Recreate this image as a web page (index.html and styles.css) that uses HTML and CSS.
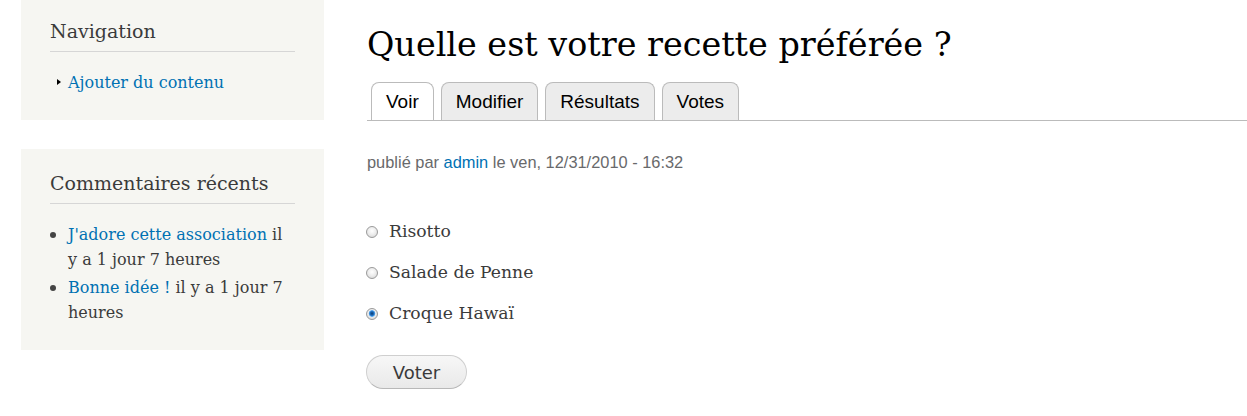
FILE: index.html
```html
<!DOCTYPE html>
<html lang="fr">
<head>
<meta charset="utf-8">
<title>Quelle est votre recette préférée ?</title>
<link rel="stylesheet" href="styles.css">
</head>
<body>
<div class="page">
  <aside class="sidebar">
    <section class="block">
      <h2 class="block-title">Navigation</h2>
      <ul class="menu">
        <li class="leaf"><a href="#">Ajouter du contenu</a></li>
      </ul>
    </section>
    <section class="block">
      <h2 class="block-title">Commentaires récents</h2>
      <ul class="comments">
        <li><a href="#">J'adore cette association</a> il y a 1 jour 7 heures</li>
        <li><a href="#">Bonne idée !</a> il y a 1 jour 7 heures</li>
      </ul>
    </section>
  </aside>
  <main class="content">
    <h1 class="title">Quelle est votre recette préférée ?</h1>
    <ul class="tabs">
      <li class="tab active"><a href="#">Voir</a></li>
      <li class="tab"><a href="#">Modifier</a></li>
      <li class="tab"><a href="#">Résultats</a></li>
      <li class="tab"><a href="#">Votes</a></li>
    </ul>
    <div class="meta">publié par <a href="#">admin</a> le ven, 12/31/2010 - 16:32</div>
    <form class="poll">
      <label class="choice"><input class="radio" type="radio" name="choice"> Risotto</label>
      <label class="choice"><input class="radio" type="radio" name="choice"> Salade de Penne</label>
      <label class="choice"><input class="radio" type="radio" name="choice" checked> Croque Hawaï</label>
      <button class="btn" type="button">Voter</button>
    </form>
  </main>
</div>
</body>
</html>
```

FILE: styles.css
```css
html, body {
  margin: 0;
  padding: 0;
  background: #fff;
}
body {
  font-family: "DejaVu Serif", Georgia, serif;
  color: #3b3b3b;
}
a {
  color: #0071b3;
  text-decoration: none;
}
.page {
  display: flex;
  align-items: flex-start;
  padding-left: 21px;
}
.sidebar {
  width: 303px;
  margin-top: -3px;
  display: flex;
  flex-direction: column;
  gap: 29px;
}
.block {
  background: #f6f6f2;
  padding: 21px 29px 25px 29px;
}
.block-title {
  margin: 0;
  font-weight: normal;
  font-size: 19px;
  line-height: 26px;
  padding-bottom: 7px;
  border-bottom: 1px solid #d6d6d6;
  color: #3b3b3b;
}
.menu, .comments {
  list-style: none;
  margin: 18px 0 0 0;
  padding: 0;
  font-size: 16px;
  line-height: 25px;
}
.menu li, .comments li {
  position: relative;
  padding-left: 18px;
}
.comments li + li {
  margin-top: 3px;
}
.menu li::before {
  content: "";
  position: absolute;
  left: 7px;
  top: 9px;
  border-left: 4px solid #000;
  border-top: 3.5px solid transparent;
  border-bottom: 3.5px solid transparent;
}
.comments li::before {
  content: "";
  position: absolute;
  left: 0;
  top: 10px;
  width: 6px;
  height: 6px;
  border-radius: 50%;
  background: #444;
}
.content {
  flex: 1;
  margin-left: 43px;
  padding-top: 25px;
}
.title {
  margin: 0;
  font-weight: normal;
  font-size: 33.4px;
  line-height: 40px;
  color: #000;
  white-space: nowrap;
}
.tabs {
  list-style: none;
  margin: 17px 0 0 0;
  padding: 0 0 0 4px;
  display: flex;
  gap: 7px;
  border-bottom: 1px solid #bbb;
  font-family: "Liberation Sans", Arial, sans-serif;
  font-size: 19px;
}
.tab a {
  display: block;
  height: 38px;
  line-height: 37px;
  padding: 0 14px;
  border: 1px solid #bbb;
  border-bottom: none;
  border-radius: 8px 8px 0 0;
  background: #ececec;
  color: #000;
  box-sizing: border-box;
}
.tab.active a {
  background: #fff;
}
.meta {
  margin-top: 31px;
  font-family: "Liberation Sans", Arial, sans-serif;
  font-size: 16.4px;
  line-height: 20px;
  color: #68696b;
}
.poll {
  display: flex;
  flex-direction: column;
  align-items: flex-start;
  margin-top: 38px;
}
.choice {
  display: flex;
  align-items: center;
  gap: 11px;
  font-size: 17.2px;
  line-height: 24px;
  height: 41px;
  color: #3b3b3b;
  margin-left: -1px;
}
.radio {
  appearance: none;
  -webkit-appearance: none;
  margin: 2px 0 0 0;
  width: 12px;
  height: 12px;
  border-radius: 50%;
  border: 1px solid #9a9a9a;
  background: radial-gradient(circle at 50% 40%, #ffffff 0%, #ececec 50%, #cfcfcf 100%);
  box-sizing: border-box;
}
.radio:checked {
  background:
    radial-gradient(circle at 50% 45%, #0b3a6e 0, #1f6fbf 2px, #5aaaf0 3px, transparent 3.6px),
    radial-gradient(circle at 50% 40%, #ffffff 0%, #ececec 50%, #cfcfcf 100%);
}
.btn {
  margin-top: 22px;
  margin-left: -1px;
  width: 101px;
  height: 34px;
  border: 1px solid #cfcfcf;
  border-bottom-color: #b8b8b8;
  border-radius: 17px;
  background: linear-gradient(#f7f7f7, #e9e9e9);
  font-family: "DejaVu Sans", Verdana, sans-serif;
  font-size: 18px;
  color: #3a3a3a;
  padding: 0;
}
```
